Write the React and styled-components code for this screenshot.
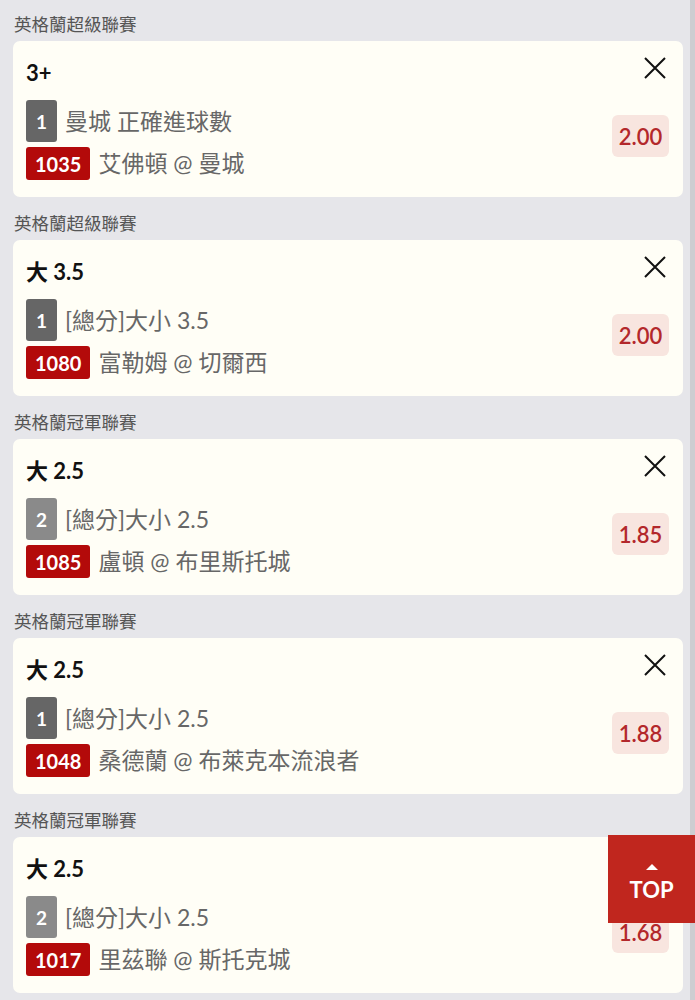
import React from "react";
import styled, { createGlobalStyle } from "styled-components";

const Global = createGlobalStyle`
  html, body { margin: 0; padding: 0; background: #e6e6ea; }
  body { font-family: Lato, "Noto Sans CJK TC", sans-serif; }
  * { box-sizing: border-box; }
`;

const Page = styled.div`
  width: 695px;
  min-height: 1000px;
  padding: 0 7px 0 13px;
  border-right: 5px solid #cdcdd1;
  background: #e6e6ea;
`;

const Group = styled.section`
  display: flex;
  flex-direction: column;
  margin-bottom: 2px;
`;

const League = styled.div`
  height: 41px;
  display: flex;
  align-items: center;
  padding-left: 1px;
  padding-top: 8px;
  font-size: 17.5px;
  line-height: 1;
  color: #555;
`;

const Card = styled.div`
  height: 156px;
  background: #fffef6;
  border-radius: 7px;
  padding: 15px 14px 0 13px;
  display: flex;
  flex-direction: column;
`;

const TopRow = styled.div`
  display: flex;
  justify-content: space-between;
  align-items: center;
  height: 30px;
`;

const Title = styled.div`
  font-size: 22px;
  line-height: 1;
  font-weight: 700;
  color: #111;
  margin-top: 3px;
`;

const Close = styled.button`
  border: 0;
  background: none;
  padding: 0;
  width: 24px;
  height: 24px;
  margin-right: 2px;
  margin-top: -6px;
  display: flex;
  align-items: center;
  justify-content: center;
`;

const Body = styled.div`
  display: flex;
  align-items: center;
  justify-content: space-between;
  margin-top: 14px;
`;

const Lines = styled.div`
  display: flex;
  flex-direction: column;
  gap: 5px;
`;

const Line = styled.div`
  display: flex;
  align-items: center;
  gap: 8px;
  font-size: 23px;
  line-height: 1;
  color: #676767;
  white-space: nowrap;
`;

const Seq = styled.span`
  width: 31px;
  height: 42px;
  border-radius: 3px;
  background: ${(p) => (p.$light ? "#8a8a8a" : "#666666")};
  color: #fff;
  font-weight: 700;
  font-size: 19px;
  display: flex;
  align-items: center;
  justify-content: center;
`;

const Code = styled.span`
  height: 33px;
  padding: 0 9px;
  border-radius: 3px;
  background: #b30a0a;
  color: #fff;
  font-weight: 700;
  font-size: 20px;
  display: flex;
  align-items: center;
  justify-content: center;
`;

const Odds = styled.div`
  width: 57px;
  height: 42px;
  border-radius: 6px;
  background: #f8e5df;
  color: #b3282b;
  font-size: 22px;
  font-weight: 600;
  display: flex;
  align-items: center;
  justify-content: center;
  margin-top: -8px;
`;

const TopBtn = styled.button`
  position: fixed;
  right: 0;
  top: 835px;
  width: 87px;
  height: 88px;
  border: 0;
  background: #c0261e;
  color: #fff;
  font-family: Lato, sans-serif;
  font-weight: 700;
  font-size: 22px;
  display: flex;
  flex-direction: column;
  align-items: center;
  justify-content: center;
  gap: 6px;
  padding: 8px 0 0 0;
`;

const Arrow = styled.span`
  width: 0;
  height: 0;
  border-left: 6px solid transparent;
  border-right: 6px solid transparent;
  border-bottom: 6px solid #fff;
`;

const CloseIcon = () => (
  <svg width="24" height="24" viewBox="0 0 24 24">
    <path d="M2 2 L22 22 M22 2 L2 22" stroke="#111" strokeWidth="2" fill="none" />
  </svg>
);

const bets = [
  { league: "英格蘭超級聯賽", title: "3+", seq: 1, market: "曼城 正確進球數", code: "1035", match: "艾佛頓 @ 曼城", odds: "2.00" },
  { league: "英格蘭超級聯賽", title: "大 3.5", seq: 1, market: "[總分]大小 3.5", code: "1080", match: "富勒姆 @ 切爾西", odds: "2.00" },
  { league: "英格蘭冠軍聯賽", title: "大 2.5", seq: 2, market: "[總分]大小 2.5", code: "1085", match: "盧頓 @ 布里斯托城", odds: "1.85" },
  { league: "英格蘭冠軍聯賽", title: "大 2.5", seq: 1, market: "[總分]大小 2.5", code: "1048", match: "桑德蘭 @ 布萊克本流浪者", odds: "1.88" },
  { league: "英格蘭冠軍聯賽", title: "大 2.5", seq: 2, market: "[總分]大小 2.5", code: "1017", match: "里茲聯 @ 斯托克城", odds: "1.68" },
];

export default function App() {
  return (
    <>
      <Global />
      <Page>
        {bets.map((b, i) => (
          <Group key={i}>
            <League>{b.league}</League>
            <Card>
              <TopRow>
                <Title>{b.title}</Title>
                <Close aria-label="close">
                  <CloseIcon />
                </Close>
              </TopRow>
              <Body>
                <Lines>
                  <Line>
                    <Seq $light={b.seq === 2}>{b.seq}</Seq>
                    <span>{b.market}</span>
                  </Line>
                  <Line>
                    <Code>{b.code}</Code>
                    <span>{b.match}</span>
                  </Line>
                </Lines>
                <Odds>{b.odds}</Odds>
              </Body>
            </Card>
          </Group>
        ))}
      </Page>
      <TopBtn>
        <Arrow />
        TOP
      </TopBtn>
    </>
  );
}
